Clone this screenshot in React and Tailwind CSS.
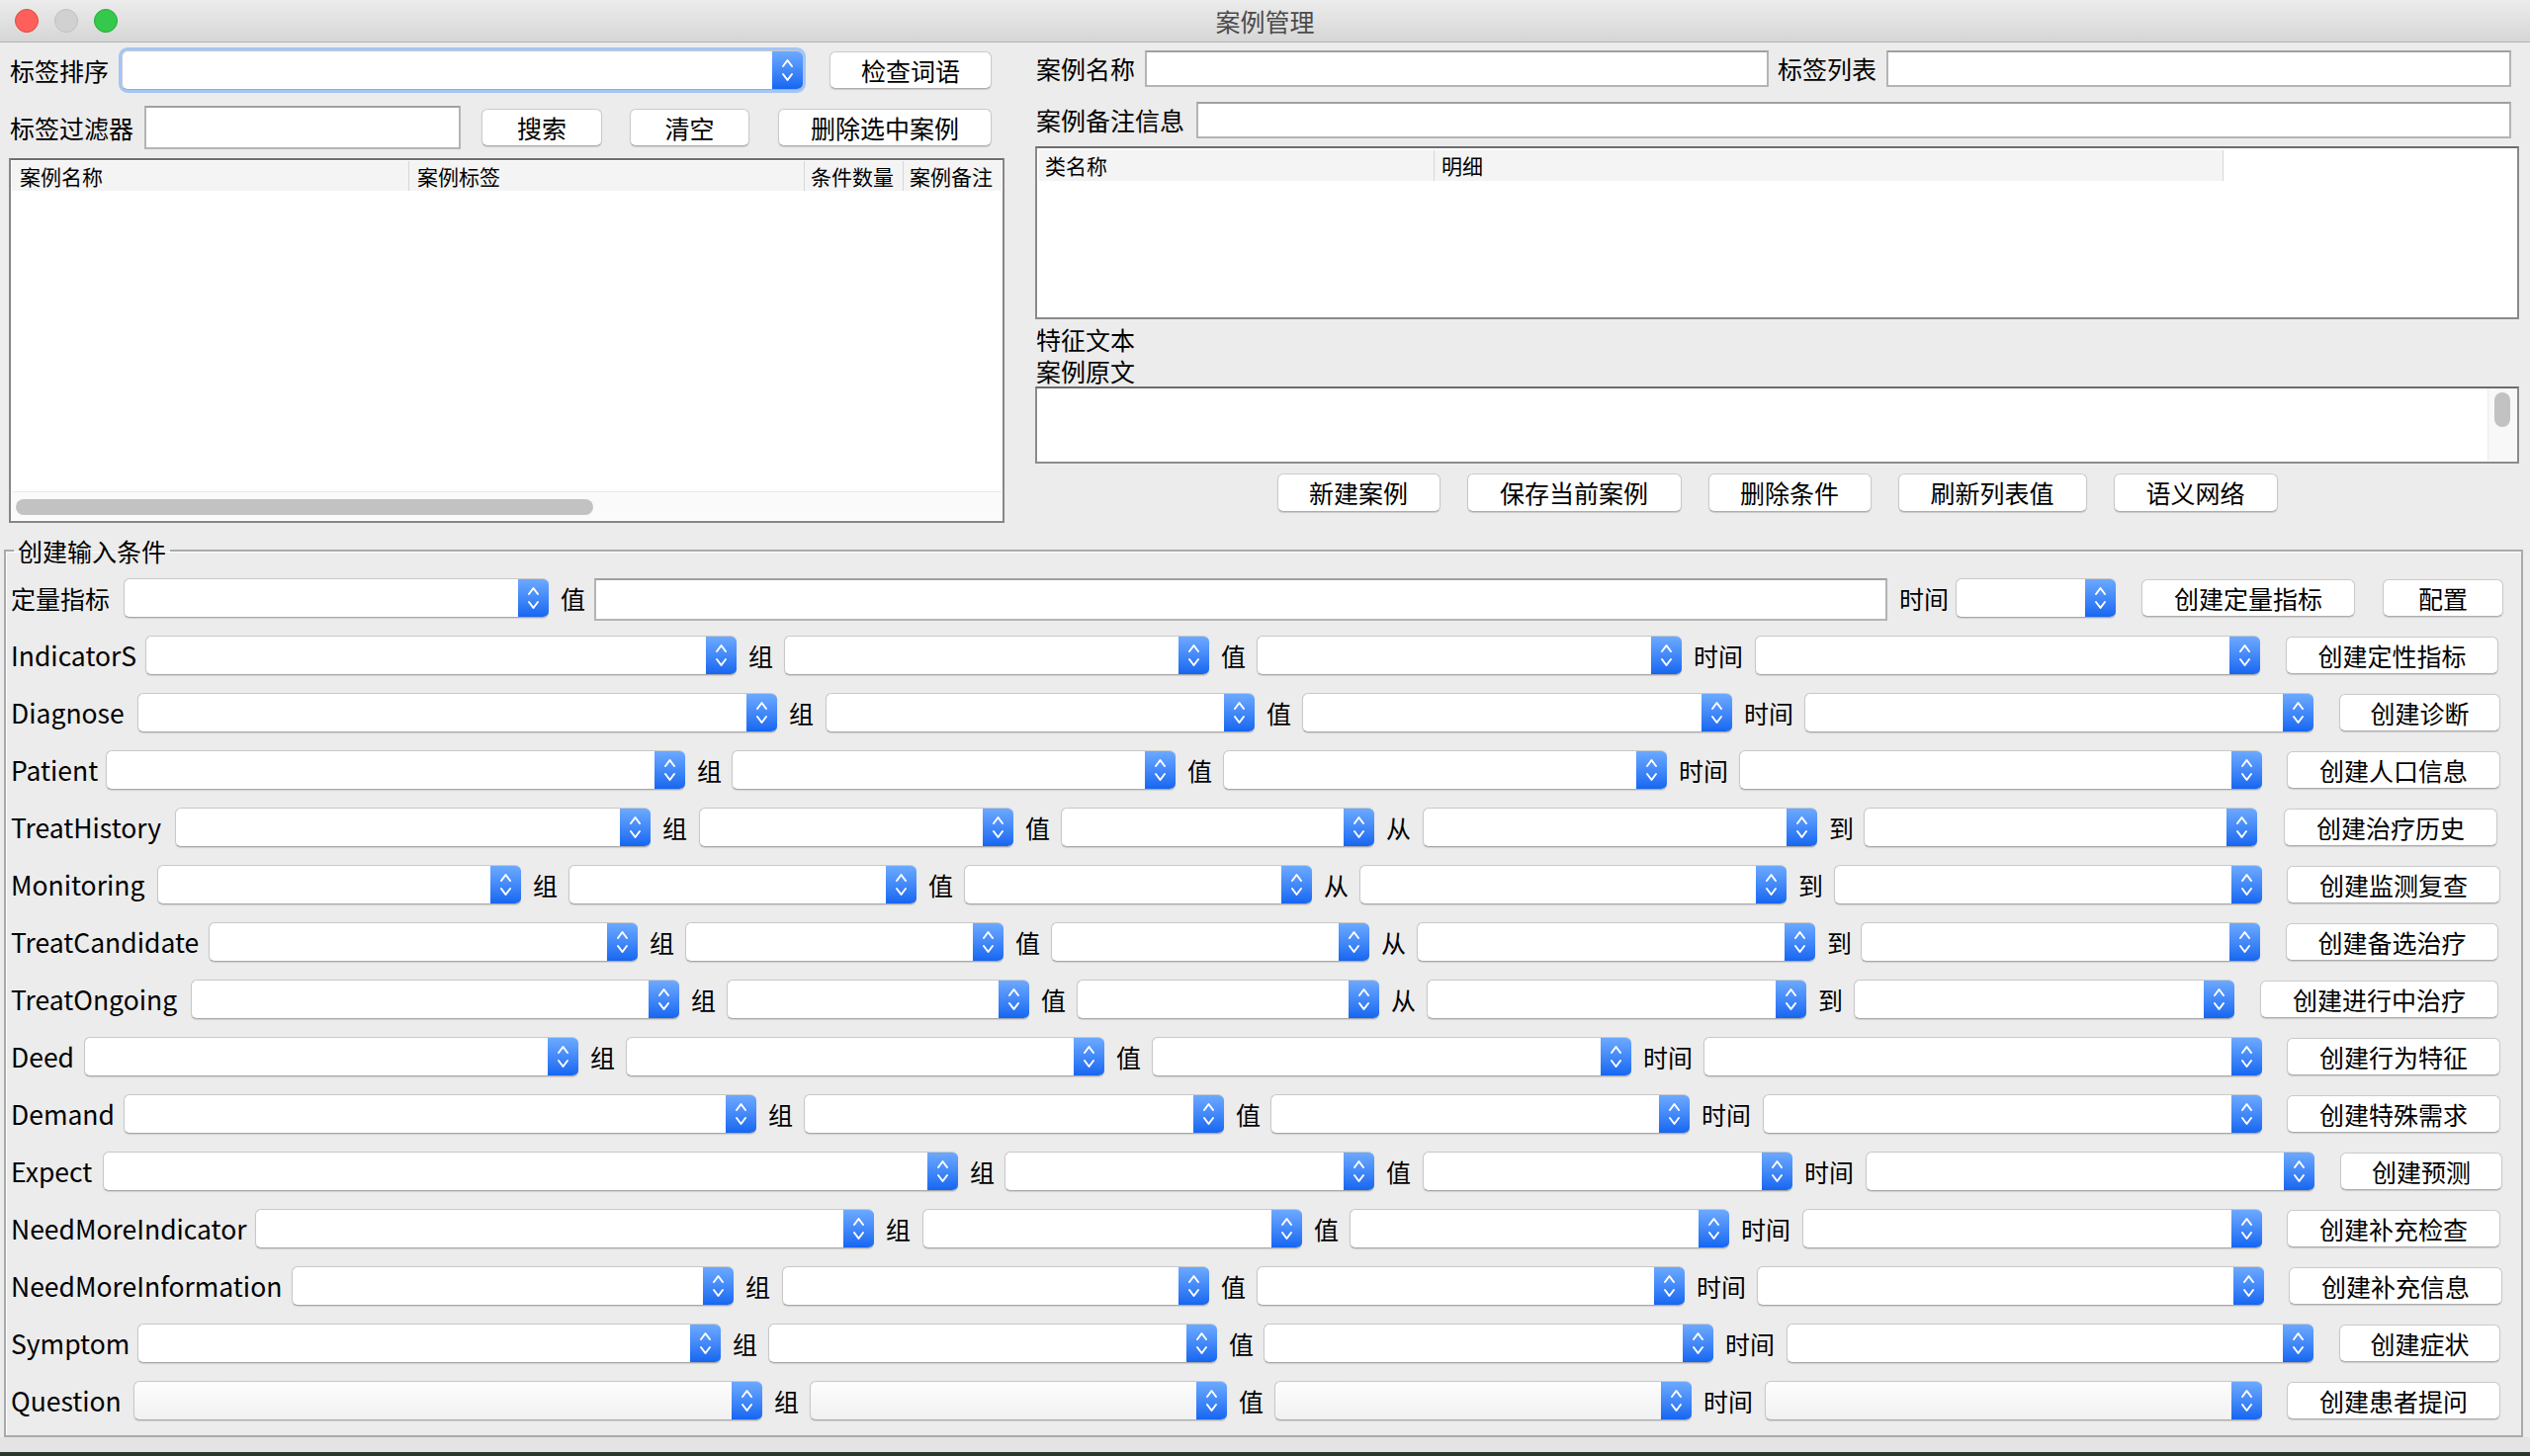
import React from 'react';

// Swing-style "案例管理" window, drawn at the 2x size of the screenshot

function Arrows() {
  return (
    <svg width="31" height="38" viewBox="0 0 31 38" fill="none" stroke="#fff" strokeWidth="2" strokeLinecap="round" strokeLinejoin="round">
      <path d="M11 15 L15.5 9 L20 15" />
      <path d="M11 23 L15.5 29 L20 23" />
    </svg>
  );
}

function Combo({ className = '', muted = false }) {
  return (
    <div
      className={`flex h-[40px] overflow-hidden rounded-[6px] border border-r-0 border-[#c8c8c8] border-b-[#a8a8a8] shadow-[0_1px_1px_rgba(0,0,0,0.12)] ${
        muted ? 'bg-linear-to-b from-[#fdfdfd] to-[#f1f1f1]' : 'bg-white'
      } ${className}`}
    >
      <div className="flex-1" />
      <div className="flex w-[31px] items-center justify-center bg-linear-to-b from-[#6ca9ff] to-[#1566f1]">
        <Arrows />
      </div>
    </div>
  );
}

function Btn({ children, className = '' }) {
  return (
    <button
      className={`flex h-[38px] items-center justify-center rounded-[6px] border border-[#cacaca] border-b-[#adadad] bg-white text-[25px] leading-none text-black shadow-[0_1px_1px_rgba(0,0,0,0.14)] ${className}`}
    >
      {children}
    </button>
  );
}

function Field({ className = '' }) {
  return <div className={`border-2 border-[#b4b4b4] border-t-[#a0a0a0] bg-white ${className}`} />;
}

const TIME = ['组', '值', '时间'];
const RANGE = ['组', '值', '从', '到'];

const ROWS = [
  { name: 'IndicatorS', cols: 'grid-cols-[141px_598px_48px_430px_48px_430px_74px_511px_26px_215px]', seps: TIME, btn: '创建定性指标' },
  { name: 'Diagnose', cols: 'grid-cols-[133px_647px_49px_434px_48px_435px_73px_515px_26px_163px]', seps: TIME, btn: '创建诊断' },
  { name: 'Patient', cols: 'grid-cols-[101px_586px_47px_449px_48px_449px_73px_529px_25px_216px]', seps: TIME, btn: '创建人口信息' },
  { name: 'TreatHistory', cols: 'grid-cols-[171px_481px_49px_318px_48px_317px_49px_399px_47px_398px_27px_216px]', seps: RANGE, btn: '创建治疗历史' },
  { name: 'Monitoring', cols: 'grid-cols-[153px_368px_48px_352px_48px_352px_48px_432px_48px_433px_25px_216px]', seps: RANGE, btn: '创建监测复查' },
  { name: 'TreatCandidate', cols: 'grid-cols-[205px_434px_48px_322px_48px_322px_48px_403px_46px_404px_26px_215px]', seps: RANGE, btn: '创建备选治疗' },
  { name: 'TreatOngoing', cols: 'grid-cols-[187px_494px_48px_306px_48px_306px_48px_384px_48px_385px_26px_241px]', seps: RANGE, btn: '创建进行中治疗' },
  { name: 'Deed', cols: 'grid-cols-[79px_500px_48px_484px_48px_485px_73px_565px_25px_216px]', seps: TIME, btn: '创建行为特征' },
  { name: 'Demand', cols: 'grid-cols-[119px_640px_48px_425px_47px_424px_74px_505px_25px_216px]', seps: TIME, btn: '创建特殊需求' },
  { name: 'Expect', cols: 'grid-cols-[98px_865px_47px_374px_49px_374px_74px_454px_26px_164px]', seps: TIME, btn: '创建预测' },
  { name: 'NeedMoreIndicator', cols: 'grid-cols-[252px_626px_49px_384px_48px_384px_74px_465px_25px_216px]', seps: TIME, btn: '创建补充检查' },
  { name: 'NeedMoreInformation', cols: 'grid-cols-[289px_447px_49px_432px_48px_433px_73px_513px_25px_216px]', seps: TIME, btn: '创建补充信息' },
  { name: 'Symptom', cols: 'grid-cols-[133px_590px_48px_454px_47px_455px_74px_533px_26px_163px]', seps: TIME, btn: '创建症状' },
  { name: 'Question', cols: 'grid-cols-[129px_636px_48px_422px_48px_422px_74px_503px_25px_216px]', seps: TIME, btn: '创建患者提问', muted: true },
];

function Label({ children, first, className = '' }) {
  return (
    <div className={`flex items-center whitespace-nowrap leading-none ${first ? 'pl-[5px]' : 'pl-[12px]'} ${className}`}>
      {children}
    </div>
  );
}

function ConditionRow({ row }) {
  return (
    <div className={`grid h-[40px] grid-rows-[40px] ${row.cols}`}>
      <Label first className="text-[26.5px]">{row.name}</Label>
      <Combo muted={row.muted} />
      {row.seps.map((s) => (
        <React.Fragment key={s}>
          <Label>{s}</Label>
          <Combo muted={row.muted} />
        </React.Fragment>
      ))}
      <div />
      <Btn className="self-center">{row.btn}</Btn>
    </div>
  );
}

export default function App() {
  return (
    <div className="flex h-[1473px] w-[2559px] flex-col overflow-hidden bg-[#ececec] font-['Noto_Sans_CJK_SC','Noto_Sans',sans-serif] text-[25px] text-black">
      {/* title bar */}
      <div className="grid h-[43px] shrink-0 grid-cols-[1fr_auto_1fr] items-center border-b border-[#b3b3b3] bg-linear-to-b from-[#ececec] to-[#d6d6d6]">
        <div className="flex items-center gap-[16px] pl-[15px]">
          <span className="h-[24px] w-[24px] rounded-full border border-[#e0483f] bg-[#fd605b]" />
          <span className="h-[24px] w-[24px] rounded-full border border-[#c0c0c0] bg-[#d1d1d1]" />
          <span className="h-[24px] w-[24px] rounded-full border border-[#27a83a] bg-[#35c94b]" />
        </div>
        <div className="text-[25px] leading-none text-[#4b4b4b]">案例管理</div>
        <div />
      </div>

      <div className="flex shrink-0">
        {/* left panel */}
        <div className="w-[1047px] shrink-0 pt-[8px]">
          <div className="flex h-[40px] items-center">
            <span className="w-[123px] shrink-0 pl-[10px] leading-none">标签排序</span>
            <Combo className="w-[689px] border-[#78a6ee] ring-[3px] ring-[#a4c5f6]" />
            <Btn className="ml-[27px] w-[164px]">检查词语</Btn>
          </div>
          <div className="mt-[16px] flex h-[44px] items-center">
            <span className="w-[146px] shrink-0 pl-[10px] leading-none">标签过滤器</span>
            <Field className="h-[44px] w-[320px]" />
            <Btn className="ml-[21px] w-[122px]">搜索</Btn>
            <Btn className="ml-[28px] w-[121px]">清空</Btn>
            <Btn className="ml-[29px] w-[216px]">删除选中案例</Btn>
          </div>
          <div className="ml-[9px] mt-[9px] flex h-[369px] w-[1007px] flex-col border-2 border-[#868686] border-t-[#6f6f6f] bg-white p-px">
            <div className="grid h-[30px] grid-cols-[401px_400px_100px_1fr] bg-[#f4f4f4] text-[21px] leading-none">
              <div className="flex items-center pl-[8px]">案例名称</div>
              <div className="flex items-center border-l border-[#d7d7d7] pl-[8px]">案例标签</div>
              <div className="flex items-center border-l border-[#d7d7d7] pl-[6px]">条件数量</div>
              <div className="flex items-center border-l border-[#d7d7d7] pl-[6px]">案例备注</div>
            </div>
            <div className="flex-1" />
            <div className="h-[29px] border-t border-[#e8e8e8] bg-[#fafafa] pl-[4px] pt-[7px]">
              <div className="h-[16px] w-[584px] rounded-full bg-[#c2c2c2]" />
            </div>
          </div>
        </div>

        {/* right panel */}
        <div className="w-[1501px] shrink-0 pt-[8px]">
          <div className="flex h-[37px] items-center">
            <span className="w-[111px] shrink-0 pl-px leading-none">案例名称</span>
            <Field className="h-[37px] w-[631px]" />
            <span className="w-[119px] shrink-0 pl-[9px] leading-none">标签列表</span>
            <Field className="h-[37px] w-[632px]" />
          </div>
          <div className="mt-[15px] flex h-[37px] items-center">
            <span className="w-[163px] shrink-0 pl-px leading-none">案例备注信息</span>
            <Field className="h-[37px] w-[1330px]" />
          </div>
          <div className="mt-[8px] flex h-[175px] flex-col border-2 border-[#8a8a8a] border-t-[#6c6c6c] bg-white p-[2px]">
            <div className="grid h-[31px] w-[1198px] grid-cols-[399px_799px] bg-[#f4f4f4] text-[21px] leading-none">
              <div className="flex items-center pl-[6px]">类名称</div>
              <div className="flex items-center border-x border-[#d7d7d7] pl-[7px]">明细</div>
            </div>
          </div>
          <div className="mt-[4px] h-[32px] pl-px leading-[32px]">特征文本</div>
          <div className="h-[32px] pl-px leading-[32px]">案例原文</div>
          <div className="flex h-[78px] border-2 border-[#8c8c8c] border-t-[#6c6c6c] bg-white">
            <div className="flex-1" />
            <div className="w-[30px] border-l border-[#ececec] bg-[#f8f8f8] pl-[6px] pt-[4px]">
              <div className="h-[35px] w-[16px] rounded-full bg-[#c2c2c2]" />
            </div>
          </div>
          <div className="mt-[10px] flex justify-center gap-[27px]">
            <Btn className="h-[39px] w-[165px]">新建案例</Btn>
            <Btn className="h-[39px] w-[217px]">保存当前案例</Btn>
            <Btn className="h-[39px] w-[165px]">删除条件</Btn>
            <Btn className="h-[39px] w-[191px]">刷新列表值</Btn>
            <Btn className="h-[39px] w-[166px]">语义网络</Btn>
          </div>
        </div>
      </div>

      {/* condition group */}
      <fieldset className="ml-[4px] mt-[12px] w-[2548px] shrink-0 border-2 border-[#a9a9a9] pb-[15px] pt-[12px] shadow-[inset_1px_1px_0_#fff]">
        <legend className="ml-[8px] px-[4px] text-[25px] leading-[32px]">创建输入条件</legend>
        <div className="flex flex-col gap-[18px]">
          <div className="grid h-[40px] grid-rows-[40px] grid-cols-[119px_430px_46px_1308px_69px_162px_26px_216px_28px_122px]">
            <Label first>定量指标</Label>
            <Combo />
            <Label>值</Label>
            <Field className="h-[43px] self-start" />
            <Label>时间</Label>
            <Combo />
            <div />
            <Btn className="self-center">创建定量指标</Btn>
            <div />
            <Btn className="self-center">配置</Btn>
          </div>
          {ROWS.map((row) => (
            <ConditionRow key={row.name} row={row} />
          ))}
        </div>
      </fieldset>

      <div className="flex-1 bg-[#e4e4e4]" />
      <div className="h-[4px] shrink-0 bg-[#2c372d]" />
    </div>
  );
}
